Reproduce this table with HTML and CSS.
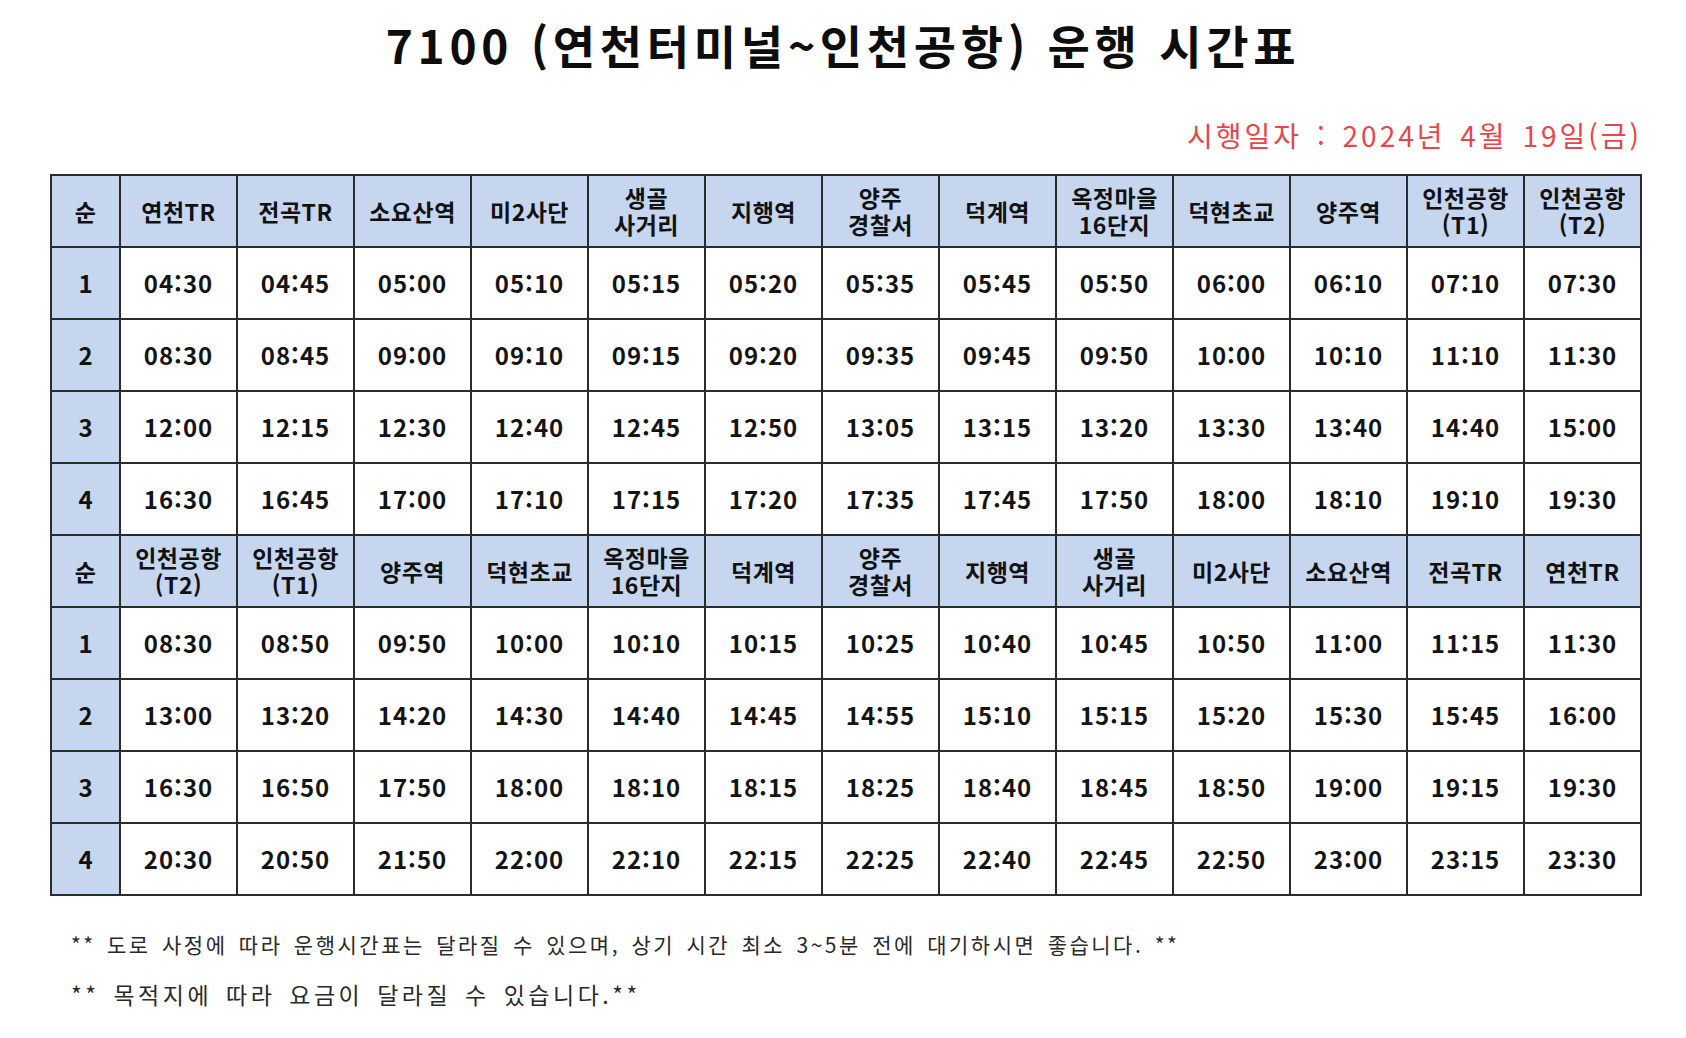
FILE: index.html
```html
<!DOCTYPE html>
<html lang="ko">
<head>
<meta charset="utf-8">
<title>7100 운행 시간표</title>
<link rel="stylesheet" href="styles.css">
</head>
<body>
<div class="page">
  <h1 class="title">7100 (연천터미널~인천공항) 운행 시간표</h1>
  <div class="date">시행일자 : 2024년 4월 19일(금)</div>
  <table class="timetable">
    <colgroup>
      <col class="c-no">
      <col class="c-st"><col class="c-st"><col class="c-st"><col class="c-st"><col class="c-st"><col class="c-st"><col class="c-st"><col class="c-st"><col class="c-st"><col class="c-st"><col class="c-st"><col class="c-st"><col class="c-st">
    </colgroup>
    <tbody>
      <tr class="head">
        <th>순</th><th>연천TR</th><th>전곡TR</th><th>소요산역</th><th>미2사단</th><th>생골<br>사거리</th><th>지행역</th><th>양주<br>경찰서</th><th>덕계역</th><th>옥정마을<br>16단지</th><th>덕현초교</th><th>양주역</th><th>인천공항<br>(T1)</th><th>인천공항<br>(T2)</th>
      </tr>
      <tr><th>1</th><td>04:30</td><td>04:45</td><td>05:00</td><td>05:10</td><td>05:15</td><td>05:20</td><td>05:35</td><td>05:45</td><td>05:50</td><td>06:00</td><td>06:10</td><td>07:10</td><td>07:30</td></tr>
      <tr><th>2</th><td>08:30</td><td>08:45</td><td>09:00</td><td>09:10</td><td>09:15</td><td>09:20</td><td>09:35</td><td>09:45</td><td>09:50</td><td>10:00</td><td>10:10</td><td>11:10</td><td>11:30</td></tr>
      <tr><th>3</th><td>12:00</td><td>12:15</td><td>12:30</td><td>12:40</td><td>12:45</td><td>12:50</td><td>13:05</td><td>13:15</td><td>13:20</td><td>13:30</td><td>13:40</td><td>14:40</td><td>15:00</td></tr>
      <tr><th>4</th><td>16:30</td><td>16:45</td><td>17:00</td><td>17:10</td><td>17:15</td><td>17:20</td><td>17:35</td><td>17:45</td><td>17:50</td><td>18:00</td><td>18:10</td><td>19:10</td><td>19:30</td></tr>
      <tr class="head">
        <th>순</th><th>인천공항<br>(T2)</th><th>인천공항<br>(T1)</th><th>양주역</th><th>덕현초교</th><th>옥정마을<br>16단지</th><th>덕계역</th><th>양주<br>경찰서</th><th>지행역</th><th>생골<br>사거리</th><th>미2사단</th><th>소요산역</th><th>전곡TR</th><th>연천TR</th>
      </tr>
      <tr><th>1</th><td>08:30</td><td>08:50</td><td>09:50</td><td>10:00</td><td>10:10</td><td>10:15</td><td>10:25</td><td>10:40</td><td>10:45</td><td>10:50</td><td>11:00</td><td>11:15</td><td>11:30</td></tr>
      <tr><th>2</th><td>13:00</td><td>13:20</td><td>14:20</td><td>14:30</td><td>14:40</td><td>14:45</td><td>14:55</td><td>15:10</td><td>15:15</td><td>15:20</td><td>15:30</td><td>15:45</td><td>16:00</td></tr>
      <tr><th>3</th><td>16:30</td><td>16:50</td><td>17:50</td><td>18:00</td><td>18:10</td><td>18:15</td><td>18:25</td><td>18:40</td><td>18:45</td><td>18:50</td><td>19:00</td><td>19:15</td><td>19:30</td></tr>
      <tr><th>4</th><td>20:30</td><td>20:50</td><td>21:50</td><td>22:00</td><td>22:10</td><td>22:15</td><td>22:25</td><td>22:40</td><td>22:45</td><td>22:50</td><td>23:00</td><td>23:15</td><td>23:30</td></tr>
    </tbody>
  </table>
  <div class="notes">
    <p class="note note-road">** 도로 사정에 따라 운행시간표는 달라질 수 있으며, 상기 시간 최소 3~5분 전에 대기하시면 좋습니다. **</p>
    <p class="note note-fare">** 목적지에 따라 요금이 달라질 수 있습니다.**</p>
  </div>
</div>
</body>
</html>
```

FILE: styles.css
```css
html, body {
  margin: 0;
  padding: 0;
  background: #ffffff;
}

body {
  font-family: "Noto Sans CJK KR", "Noto Sans", sans-serif;
  color: #111111;
}

.page {
  width: 1686px;
  padding-top: 20px;
}

.title {
  margin: 0;
  text-align: center;
  font-size: 46px;
  line-height: 48px;
  font-weight: 700;
  letter-spacing: 4.7px;
  color: #0d0d0d;
}

.date {
  margin-top: 49px;
  padding-right: 44px;
  text-align: right;
  font-size: 28px;
  line-height: 36px;
  letter-spacing: 3px;
  word-spacing: 4px;
  color: #e5474b;
}

.timetable {
  margin-top: 21px;
  margin-left: 50px;
  width: 1591px;
  table-layout: fixed;
  border-collapse: collapse;
  border: 2px solid #2b2b2b;
}

.c-no { width: 69px; }
.c-st { width: 117px; }

.timetable tr {
  height: 72px;
}

.timetable th,
.timetable td {
  border: 2px solid #2b2b2b;
  padding: 0;
  text-align: center;
  vertical-align: middle;
  font-size: 24px;
  line-height: 28px;
  font-weight: 700;
}

.timetable th {
  background: #c6d6ef;
}

.head th {
  font-size: 23px;
  line-height: 27px;
  letter-spacing: 0.5px;
  white-space: nowrap;
}

.timetable td {
  background: #ffffff;
  letter-spacing: 1px;
  color: #141414;
}

.notes {
  margin-top: 33px;
  padding-left: 71px;
}

.note {
  margin: 0 0 20px 0;
  line-height: 30px;
  color: #2a2a2a;
}

.note-road {
  font-size: 21px;
  letter-spacing: 2.5px;
  word-spacing: 3px;
}

.note-fare {
  font-size: 23px;
  letter-spacing: 3.5px;
  word-spacing: 4px;
}
```
